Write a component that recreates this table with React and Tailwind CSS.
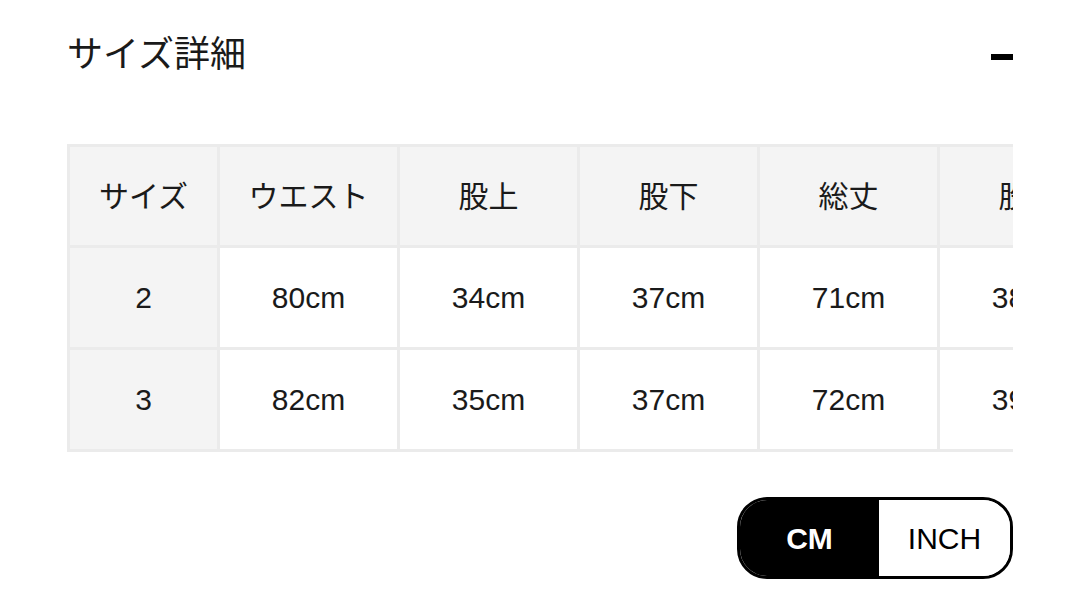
import React from 'react';

const headers = ['サイズ', 'ウエスト', '股上', '股下', '総丈', '股下'];
const rows = [
  ['2', '80cm', '34cm', '37cm', '71cm', '38cm'],
  ['3', '82cm', '35cm', '37cm', '72cm', '39cm'],
];

const jp = { fontFamily: '"Liberation Sans", "Noto Sans CJK JP", sans-serif' };

export default function App() {
  return (
    <div className="w-[1080px] h-[603px] bg-white px-[67px] text-[#1a1a1a]" style={jp}>
      <div className="flex items-center justify-between h-[108px] pt-[2px]">
        <h2 className="text-[36px] leading-none">サイズ詳細</h2>
        <span className="block w-[22px] h-[6px] bg-black mt-[3px]"></span>
      </div>

      <div className="mt-[36px] w-[946px] overflow-hidden">
        <table className="table-fixed border-collapse w-[1050px] border-l-[3px] border-[#ebebeb]">
          <colgroup>
            <col className="w-[150px]" />
            <col className="w-[180px]" />
            <col className="w-[180px]" />
            <col className="w-[180px]" />
            <col className="w-[180px]" />
            <col className="w-[180px]" />
          </colgroup>
          <thead>
            <tr className="h-[101px] bg-[#f4f4f4]">
              {headers.map((h, i) => (
                <th key={i} className="border-[3px] border-[#ebebeb] font-normal text-[30px] text-center whitespace-nowrap">
                  {h}
                </th>
              ))}
            </tr>
          </thead>
          <tbody>
            {rows.map((r, ri) => (
              <tr key={ri} className="h-[102px]">
                {r.map((c, ci) => (
                  <td
                    key={ci}
                    className={`border-[3px] border-[#ebebeb] text-[30px] text-center whitespace-nowrap ${ci === 0 ? 'bg-[#f4f4f4]' : 'bg-white'}`}
                  >
                    {c}
                  </td>
                ))}
              </tr>
            ))}
          </tbody>
        </table>
      </div>

      <div className="flex justify-end mt-[45px]">
        <div className="flex w-[276px] h-[82px] border-[3px] border-black rounded-[30px] overflow-hidden">
          <button className="w-[139px] h-full bg-black text-white text-[30px] font-bold">CM</button>
          <button className="flex-1 h-full bg-white text-black text-[30px]">INCH</button>
        </div>
      </div>
    </div>
  );
}
